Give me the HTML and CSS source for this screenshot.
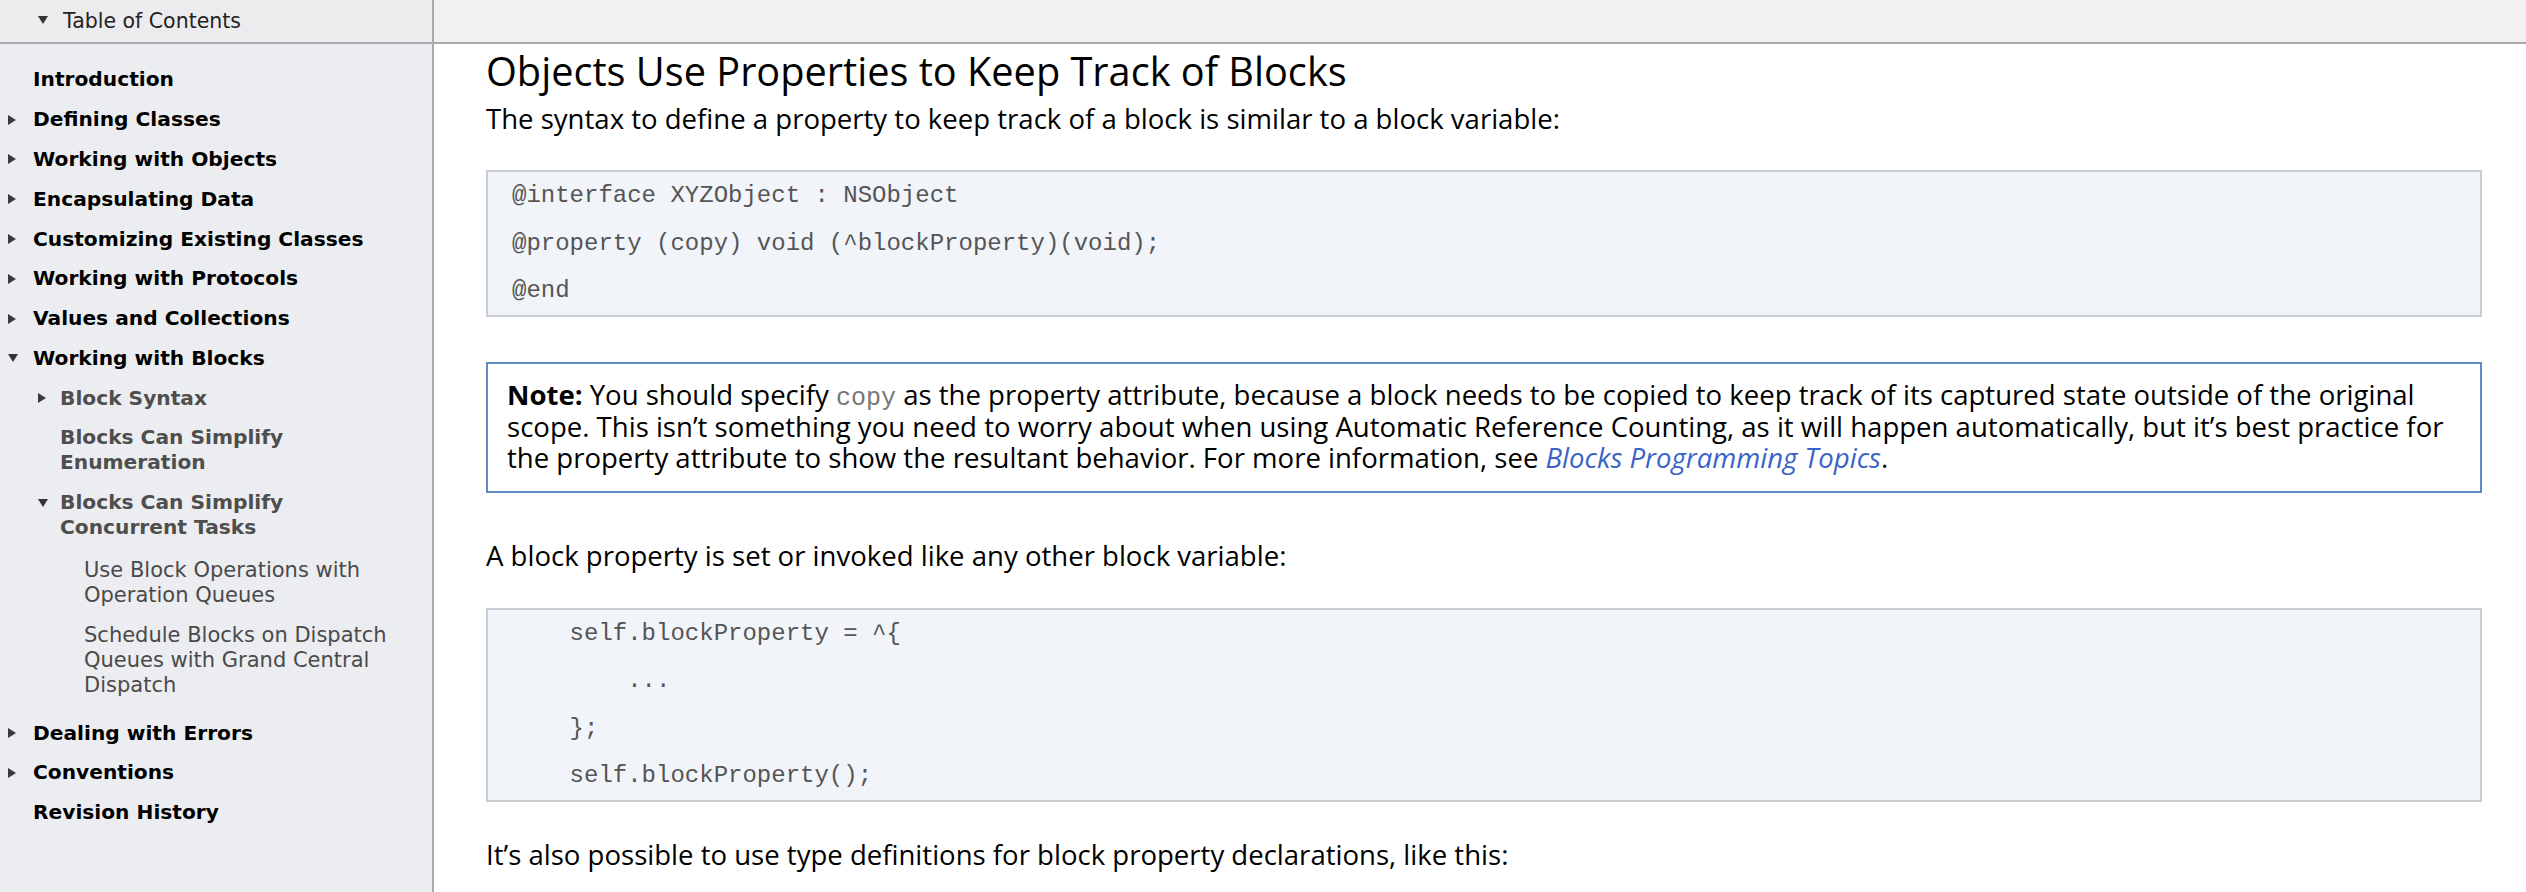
FILE: index.html
```html
<!DOCTYPE html>
<html lang="en">
<head>
<meta charset="utf-8">
<title>Working with Blocks</title>
<link rel="stylesheet" href="styles.css">
</head>
<body>
<div class="app">
  <aside class="toc">
    <div class="toc-header"><span class="tri-d hdr"></span><span>Table of Contents</span></div>
    <ul class="toc-list">
      <li class="l1"><div class="row"><span class="tw"></span><span class="lbl">Introduction</span></div></li>
      <li class="l1"><div class="row"><span class="tw"><span class="tri-r"></span></span><span class="lbl">Defining Classes</span></div></li>
      <li class="l1"><div class="row"><span class="tw"><span class="tri-r"></span></span><span class="lbl">Working with Objects</span></div></li>
      <li class="l1"><div class="row"><span class="tw"><span class="tri-r"></span></span><span class="lbl">Encapsulating Data</span></div></li>
      <li class="l1"><div class="row"><span class="tw"><span class="tri-r"></span></span><span class="lbl">Customizing Existing Classes</span></div></li>
      <li class="l1"><div class="row"><span class="tw"><span class="tri-r"></span></span><span class="lbl">Working with Protocols</span></div></li>
      <li class="l1"><div class="row"><span class="tw"><span class="tri-r"></span></span><span class="lbl">Values and Collections</span></div></li>
      <li class="l1"><div class="row"><span class="tw"><span class="tri-d"></span></span><span class="lbl">Working with Blocks</span></div>
        <ul class="sub">
          <li class="l2"><div class="row"><span class="tw"><span class="tri-r"></span></span><span class="lbl">Block Syntax</span></div></li>
          <li class="l2"><div class="row"><span class="tw"></span><span class="lbl">Blocks Can Simplify Enumeration</span></div></li>
          <li class="l2"><div class="row"><span class="tw"><span class="tri-d"></span></span><span class="lbl">Blocks Can Simplify Concurrent Tasks</span></div>
            <ul class="subsub">
              <li class="l3"><div class="row"><span class="lbl">Use Block Operations with Operation Queues</span></div></li>
              <li class="l3"><div class="row"><span class="lbl">Schedule Blocks on Dispatch Queues with Grand Central Dispatch</span></div></li>
            </ul>
          </li>
        </ul>
      </li>
      <li class="l1"><div class="row"><span class="tw"><span class="tri-r"></span></span><span class="lbl">Dealing with Errors</span></div></li>
      <li class="l1"><div class="row"><span class="tw"><span class="tri-r"></span></span><span class="lbl">Conventions</span></div></li>
      <li class="l1"><div class="row"><span class="tw"></span><span class="lbl">Revision History</span></div></li>
    </ul>
  </aside>
  <main class="main">
    <div class="main-header"></div>
    <article class="content">
      <h1 class="title">Objects Use Properties to Keep Track of Blocks</h1>
      <p class="para first">The syntax to define a property to keep track of a block is similar to a block variable:</p>
      <pre class="code c1">@interface XYZObject : NSObject
@property (copy) void (^blockProperty)(void);
@end</pre>
      <div class="note">
        <p><strong>Note:</strong> You should specify <code class="inline">copy</code> as the property attribute, because a block needs to be copied to keep track of its captured state outside of the original<br>scope. This isn’t something you need to worry about when using Automatic Reference Counting, as it will happen automatically, but it’s best practice for<br>the property attribute to show the resultant behavior. For more information, see <a class="link" href="#">Blocks Programming Topics</a>.</p>
      </div>
      <p class="para">A block property is set or invoked like any other block variable:</p>
      <pre class="code c2">    self.blockProperty = ^{
        ...
    };
    self.blockProperty();</pre>
      <p class="para">It’s also possible to use type definitions for block property declarations, like this:</p>
    </article>
  </main>
</div>
</body>
</html>
```

FILE: styles.css
```css
html, body {
  margin: 0;
  padding: 0;
  background: #ffffff;
}
body {
  font-family: "DejaVu Sans", sans-serif;
  color: #000;
}
.app {
  display: flex;
  height: 892px;
  overflow: hidden;
}

/* ---------- sidebar ---------- */
.toc {
  width: 432px;
  flex: none;
  background: #ecedf1;
  border-right: 2px solid #a9a9a9;
}
.toc-header {
  height: 42px;
  border-bottom: 2px solid #ababab;
  display: flex;
  align-items: center;
  padding-left: 38px;
  font-size: 20.5px;
  color: #222;
  background: #ececef;
}
.toc-header .hdr {
  margin-right: 15px;
  margin-top: -2px;
}
.toc-list, .toc-list ul {
  list-style: none;
  margin: 0;
  padding: 0;
}
.toc-list {
  padding: 16px 27px 0 8px;
}
.row {
  display: flex;
  align-items: flex-start;
  padding: 7.4px 0;
  line-height: 25px;
}
.tw {
  width: 25px;
  height: 25px;
  flex: none;
  display: flex;
  align-items: center;
}
.lbl {
  flex: 1;
  min-width: 0;
}
.tri-r {
  width: 0;
  height: 0;
  border-top: 5px solid transparent;
  border-bottom: 5px solid transparent;
  border-left: 8px solid #3a3a3a;
}
.tri-d {
  width: 0;
  height: 0;
  border-left: 5px solid transparent;
  border-right: 5px solid transparent;
  border-top: 8px solid #333;
}
.l1 > .row {
  font-weight: bold;
  font-size: 20.2px;
  color: #000;
}
.toc-list ul.sub {
  padding-left: 30px;
}
.l2 > .row {
  font-weight: bold;
  font-size: 20.2px;
  color: #4e4e4e;
}
.l2 > .row .tw {
  width: 22px;
}
.toc-list ul.subsub {
  padding: 3px 0 8px 46px;
}
.l3 > .row {
  font-weight: normal;
  font-size: 21px;
  color: #4a4a4a;
}

/* ---------- main ---------- */
.main {
  flex: 1;
  min-width: 0;
}
.main-header {
  height: 42px;
  background: #f1f1f1;
  border-bottom: 2px solid #ababab;
}
.content {
  padding: 0 44px 0 52px;
  font-family: "Open Sans", "Noto Sans", sans-serif;
  font-size: 27.55px;
}
.title {
  margin: 7px 0 0;
  font-size: 39.7px;
  line-height: 40px;
  font-weight: normal;
  color: #000;
}
.para {
  margin: 47px 0 0;
  line-height: 32px;
}
.para.first {
  margin-top: 12px;
}
.code {
  margin: 0;
  font-family: "Liberation Mono", monospace;
  font-size: 24px;
  line-height: 47.5px;
  color: #555;
  background: #f1f4f9;
  border: 2px solid #c8cdd4;
  padding: 0 24px;
}
.c1 {
  margin-top: 35px;
}
.c2 {
  margin-top: 36px;
}
.c2 + .para {
  margin-top: 37px;
}
.note {
  margin-top: 45px;
  border: 2px solid #5d89c4;
  padding: 15px 0 17px 19px;
  line-height: 31.5px;
}
.note p {
  margin: 0;
}
.note + .para {
  margin-top: 47px;
}
.inline {
  font-family: "Liberation Mono", monospace;
  font-size: 25px;
  line-height: 1;
  color: #777;
}
.link {
  color: #3a63c8;
  font-style: italic;
  text-decoration: none;
}
```
